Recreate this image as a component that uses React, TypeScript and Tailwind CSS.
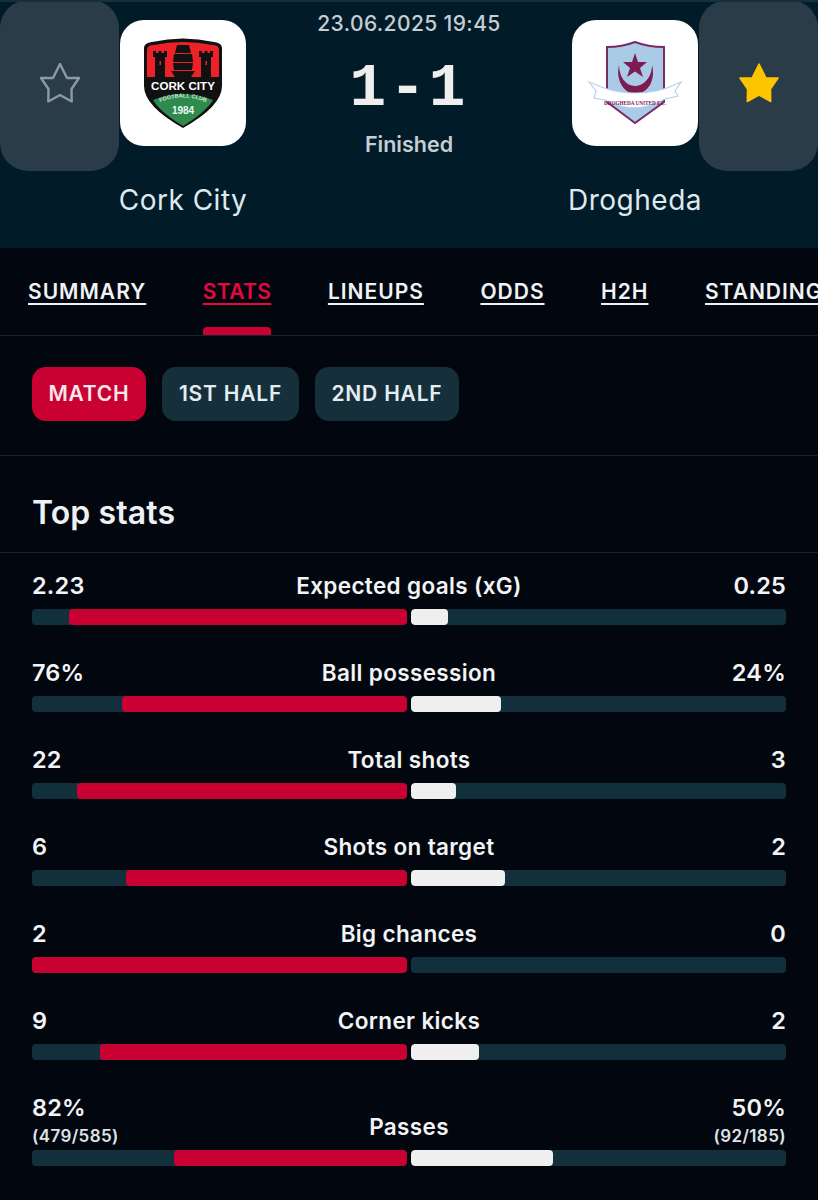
const tabs = ["SUMMARY", "STATS", "LINEUPS", "ODDS", "H2H", "STANDINGS"];
const periods = [
  { label: "MATCH", width: 114 },
  { label: "1ST HALF", width: 137 },
  { label: "2ND HALF", width: 144 },
];

const stats = [
  { label: "Expected goals (xG)", home: "2.23", away: "0.25", homeBar: 338, awayBar: 37 },
  { label: "Ball possession", home: "76%", away: "24%", homeBar: 285, awayBar: 90 },
  { label: "Total shots", home: "22", away: "3", homeBar: 330, awayBar: 45 },
  { label: "Shots on target", home: "6", away: "2", homeBar: 281, awayBar: 94 },
  { label: "Big chances", home: "2", away: "0", homeBar: 375, awayBar: 0 },
  { label: "Corner kicks", home: "9", away: "2", homeBar: 307, awayBar: 68 },
  { label: "Passes", home: "82%", away: "50%", homeSub: "(479/585)", awaySub: "(92/185)", homeBar: 233, awayBar: 142 },
];

const STAR_POINTS = "20,1 27,15 39,15 31.5,26 31.7,38.5 20,32 8.3,38.5 8.5,26 1,15 13,15";

function CorkCrest() {
  return (
    <svg viewBox="0 0 126 126" className="w-[126px] h-[126px]">
      <path d="M24 28 Q24 23 32 22 Q63 15 94 22 Q102 23 102 28 V66 Q102 86 63 108 Q24 86 24 66 Z" fill="#111" />
      <path d="M27 30 Q27 25 34 25 Q63 19 92 25 Q99 25 99 30 V57 H27 Z" fill="#ee2028" />
      {/* towers and ship */}
      <path d="M35 57 V37 H33 V31 H36 V33 H38.5 V31 H41.5 V33 H44 V31 H47 V37 H45 V57 Z" fill="#111" />
      <path d="M81 57 V37 H79 V31 H82 V33 H84.5 V31 H87.5 V33 H90 V31 H93 V37 H91 V57 Z" fill="#111" />
      <path d="M39.5 41 H41 V45 H39.5 Z M85.5 41 H87 V45 H85.5 Z" fill="#ee2028" />
      <path d="M57 25 H69 L71 33 H55 Z M54 34 H72 L73 42 H53 Z M53 43 H73 L72 50 H54 Z M51 51 H75 L71 57 H55 Z" fill="#111" />
      <text x="63" y="70" textAnchor="middle" fontFamily="Liberation Sans" fontWeight="700" fontSize="11.6" fill="#fff">CORK CITY</text>
      <path d="M33 80 Q63 68 93 80 Q86 92 63 106 Q40 92 33 80 Z" fill="#2f8a4e" />
      <path id="club-arc" d="M38 83 Q63 72 88 83" fill="none" />
      <text fontFamily="Liberation Sans" fontWeight="700" fontSize="5.6" fill="#cfe8d5" textAnchor="middle">
        <textPath href="#club-arc" startOffset="50%">FOOTBALL CLUB</textPath>
      </text>
      <text x="63" y="94" textAnchor="middle" fontFamily="Liberation Sans" fontWeight="700" fontSize="10" fill="#eef7f0">1984</text>
    </svg>
  );
}

function DroghedaCrest() {
  return (
    <svg viewBox="0 0 126 126" className="w-[126px] h-[126px]">
      <path d="M35 27 Q50 27 63 22 Q76 27 92 27 V82 L63 103 L35 82 Z" fill="#a9cbe8" stroke="#7b2a63" strokeWidth="2" />
      <path d="M63 33 L66 42 H75 L68 48 L71 57 L63 51.5 L55 57 L58 48 L51 42 H60 Z" fill="#7d1b52" />
      <path d="M47 45 C43 62 54 74 63 74 C76 74 84 60 80 45 C80 57 72 66 63 66 C54 66 47 57 47 45 Z" fill="#7d1b52" />
      <path d="M17 62 L32 68 Q63 78 95 68 L109 62 L103 71 L106 76 L93 79 Q63 96 33 80 L22 78 L24 71 Z" fill="#fff" stroke="#b5d2ea" strokeWidth="1.2" />
      <text x="63" y="84.5" textAnchor="middle" fontFamily="Liberation Serif" fontWeight="700" fontSize="5.2" fill="#7d1b52">DROGHEDA UNITED F.C.</text>
    </svg>
  );
}

function FavButton({ active }: { active?: boolean }) {
  return (
    <div className="w-[119px] h-[171px] -mt-[2px] shrink-0 rounded-[28px] bg-[#2a3c47] flex items-center justify-center">
      <svg viewBox="0 0 40 40" className="w-10 h-10 -mt-[5px]">
        {active ? (
          <polygon points={STAR_POINTS} fill="#fdc500" stroke="#fdc500" strokeWidth="1.5" strokeLinejoin="round" />
        ) : (
          <polygon points={STAR_POINTS} fill="none" stroke="#8d9aa0" strokeWidth="2.4" strokeLinejoin="round" />
        )}
      </svg>
    </div>
  );
}

function Team({ name, children }: { name: string; children: React.ReactNode }) {
  return (
    <div className="w-[126px] shrink-0 flex flex-col items-center pt-[18px]">
      <div className="w-[126px] h-[126px] bg-white rounded-[24px] overflow-hidden">{children}</div>
      <div className="mt-[36px] text-[28px] leading-[36px] tracking-[0.5px] text-[#dfe9ee] whitespace-nowrap">{name}</div>
    </div>
  );
}

function StatRow({ stat }: { stat: (typeof stats)[number] }) {
  return (
    <div>
      <div className="grid grid-cols-[1fr_auto_1fr]">
        <div className="flex flex-col items-start">
          <span className="text-[23.5px] leading-[28px] font-semibold tracking-[0.2px] text-[#f2f4f5]">{stat.home}</span>
          {stat.homeSub && <span className="text-[17px] leading-[28px] font-semibold tracking-[0.4px] text-[#dfe3e6]">{stat.homeSub}</span>}
        </div>
        <div className={`self-end ${stat.homeSub ? "mb-[9px]" : ""} text-[22.5px] leading-[28px] font-semibold tracking-[0.35px] text-[#f2f4f5] text-center`}>{stat.label}</div>
        <div className="flex flex-col items-end">
          <span className="text-[23.5px] leading-[28px] font-semibold tracking-[0.2px] text-[#f2f4f5]">{stat.away}</span>
          {stat.awaySub && <span className="text-[17px] leading-[28px] font-semibold tracking-[0.4px] text-[#dfe3e6]">{stat.awaySub}</span>}
        </div>
      </div>
      <div className={`${stat.homeSub ? "mt-0" : "mt-[9px]"} flex gap-[4px]`}>
        <div className="h-4 flex-1 rounded-[4px] bg-[#12303c] flex justify-end overflow-hidden">
          <div className="h-4 rounded-[4px] bg-[#c90032]" style={{ width: stat.homeBar }}></div>
        </div>
        <div className="h-4 flex-1 rounded-[4px] bg-[#12303c] overflow-hidden">
          <div className="h-4 rounded-[4px] bg-[#efefef]" style={{ width: stat.awayBar }}></div>
        </div>
      </div>
    </div>
  );
}

export default function App() {
  return (
    <div className="w-[818px] h-[1200px] overflow-hidden bg-[#02070f] font-['Inter',sans-serif]">
      {/* Match header */}
      <div className="h-[248px] bg-[#021b28] border-t-2 border-[#13303c] flex overflow-hidden">
        <FavButton />
        <div className="ml-px">
          <Team name="Cork City">
            <CorkCrest />
          </Team>
        </div>
        <div className="flex-1 flex flex-col items-center">
          <div className="mt-[8px] text-[21px] leading-[28px] font-medium tracking-[0.4px] text-[#c5ced4]">23.06.2025 19:45</div>
          <div className="mt-[20px] h-[62px] text-[61px] leading-[62px] font-bold tracking-[3px] font-['Liberation_Mono',monospace] text-[#eeeeee]">1-1</div>
          <div className="mt-[10px] text-[21.5px] leading-[28px] font-semibold text-[#c5ced4]">Finished</div>
        </div>
        <Team name="Drogheda">
          <DroghedaCrest />
        </Team>
        <div className="ml-px">
          <FavButton active />
        </div>
      </div>

      {/* Tabs */}
      <div className="h-[88px] border-b border-[#10262f] flex gap-[56.5px] pl-[28px] overflow-hidden">
        {tabs.map((tab) => (
          <div key={tab} className="relative shrink-0 h-[87px] pt-[30px]">
            <span className={`text-[21px] leading-[28px] font-semibold underline underline-offset-[4px] ${tab === "STATS" ? "tracking-[0.4px] text-[#e8063f]" : "tracking-[1px] text-[#f0f3f5]"}`}>
              {tab}
            </span>
            {tab === "STATS" && <div className="absolute bottom-0 left-0 right-0 h-2 rounded-t-[4px] bg-[#c90032]"></div>}
          </div>
        ))}
      </div>

      {/* Period switch */}
      <div className="h-[120px] border-b border-[#10262f] flex gap-4 pl-[32px] pt-[31px]">
        {periods.map((period, i) => (
          <div
            key={period.label}
            style={{ width: period.width }}
            className={`h-[54px] rounded-[14px] flex items-center justify-center text-[21px] font-semibold tracking-[0.8px] ${i === 0 ? "bg-[#c90032] text-[#f5e6ea]" : "bg-[#15303b] text-[#e5edf3]"}`}
          >
            {period.label}
          </div>
        ))}
      </div>

      {/* Top stats */}
      <div className="h-[97px] border-b border-[#10262f] pl-[32px] pt-[37px] text-[32px] leading-[40px] font-semibold tracking-[0.1px] text-[#eef1f3]">Top stats</div>
      <div className="px-[32px] pt-[19px] flex flex-col gap-[34px]">
        {stats.map((stat) => (
          <StatRow key={stat.label} stat={stat} />
        ))}
      </div>
    </div>
  );
}
